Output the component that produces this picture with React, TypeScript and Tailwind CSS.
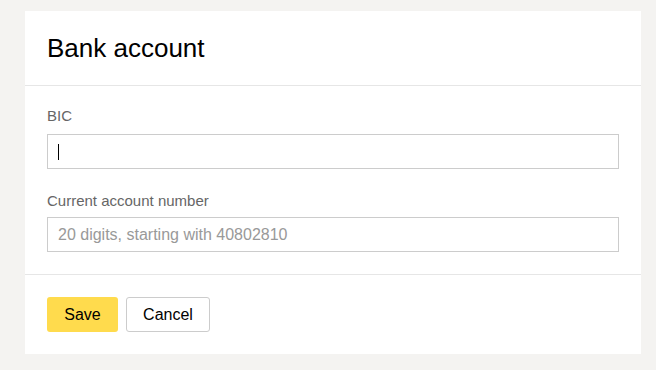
export default function App() {
  return (
    <div
      className="min-h-[370px] bg-[#f4f3f1] px-[25px] pt-[11px] pb-[17px]"
      style={{ fontFamily: '"Liberation Sans", Arial, sans-serif' }}
    >
      <div className="w-[616px] bg-white">
        {/* Header */}
        <div className="h-[75px] flex items-center px-[22px] border-b border-[#e6e6e6]">
          <h1 className="text-[26px] leading-none text-black">Bank account</h1>
        </div>

        {/* Fields */}
        <div className="px-[22px] pt-[21px] pb-[22px] border-b border-[#e6e6e6]">
          <label className="block text-[15px] leading-[18px] text-[#666] mb-[9px]">BIC</label>
          <div className="h-[35px] border border-[#ccc] flex items-center px-[10px]">
            <span className="block w-px h-[16px] bg-black" />
          </div>

          <label className="block text-[15px] leading-[18px] text-[#666] mt-[23px] mb-[7px]">
            Current account number
          </label>
          <input
            className="block w-full h-[35px] border border-[#ccc] px-[10px] text-[16px] text-black placeholder:text-[#999] outline-none"
            placeholder="20 digits, starting with 40802810"
          />
        </div>

        {/* Footer */}
        <div className="flex gap-2 px-[22px] py-[22px]">
          <button className="w-[71px] h-[35px] rounded-[3px] bg-[#ffdb4d] text-[16px] text-black">
            Save
          </button>
          <button className="w-[84px] h-[35px] rounded-[3px] border border-[#ccc] bg-white text-[16px] text-black">
            Cancel
          </button>
        </div>
      </div>
    </div>
  )
}
